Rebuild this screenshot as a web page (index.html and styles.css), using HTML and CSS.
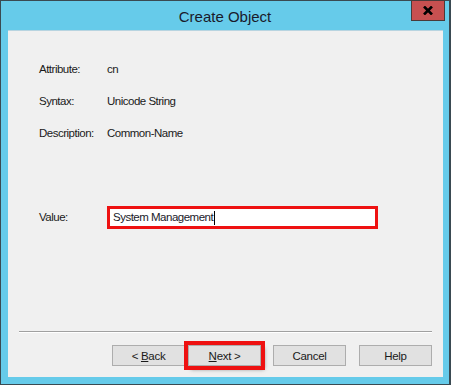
FILE: index.html
```html
<!DOCTYPE html>
<html lang="en">
<head>
  <meta charset="UTF-8">
  <title>Create Object</title>
  <link rel="stylesheet" href="styles.css">
</head>
<body>
<div class="window">
  <div class="titlebar">
    <div class="title">Create Object</div>
    <button class="close-btn" aria-label="Close">
      <svg width="10" height="9" viewBox="0 0 10 9">
        <path d="M1 0.5 L9 8.5 M9 0.5 L1 8.5" stroke="#000" stroke-width="2.6" fill="none"/>
      </svg>
    </button>
  </div>

  <div class="client">
    <div class="info">
      <div class="label">Attribute:</div>
      <div class="value">cn</div>
      <div class="label">Syntax:</div>
      <div class="value">Unicode String</div>
      <div class="label">Description:</div>
      <div class="value">Common-Name</div>
    </div>

    <div class="value-row">
      <div class="label">Value:</div>
      <div class="textbox">System Management<span class="caret"></span></div>
    </div>

    <div class="separator"></div>

    <div class="buttons">
      <button class="btn">&lt; <u>B</u>ack</button>
      <button class="btn btn-next"><u>N</u>ext &gt;</button>
      <button class="btn btn-cancel">Cancel</button>
      <button class="btn btn-help">Help</button>
    </div>
  </div>
</div>
</body>
</html>
```

FILE: styles.css
```css
html, body {
  margin: 0;
  background-color: #ffffff;
}

/* Outer window frame */
.window {
  width: 451px;
  height: 385px;
  box-sizing: border-box;
  border: 1px solid #3a4a52;
  border-right-width: 2px;
  background-color: #66cbea;
  display: flex;
  flex-direction: column;
  font-family: "Liberation Sans", Arial, sans-serif;
  color: #1a1a1a;
}

/* Title bar: title centered, close button on the right */
.titlebar {
  height: 29px;
  display: grid;
  grid-template-columns: 1fr auto 1fr;
}

.title {
  grid-column: 2;
  font-size: 15px;
  line-height: 29px;
  padding-top: 1px;
  color: #1a1a2a;
}

.close-btn {
  grid-column: 3;
  justify-self: end;
  align-self: start;
  margin: -1px 4px 0 0;
  width: 34px;
  height: 21px;
  padding: 0;
  border: 1px solid #4a3a3a;
  background-color: #c75050;
  display: flex;
  align-items: center;
  justify-content: center;
}

/* The grey dialog area */
.client {
  margin: 0 6px 7px 7px;
  flex: 1;
  background-color: #f0f0f0;
  border-top: 1px solid #b8d4e0;
  display: flex;
  flex-direction: column;
  font-size: 11.5px;
  letter-spacing: -0.5px;
}

.info {
  display: grid;
  grid-template-columns: 68px auto;
  row-gap: 19px;
  line-height: 13px;
  padding: 32px 0 0 31px;
}

.value-row {
  display: flex;
  align-items: center;
  margin: 66px 0 0 31px;
}

.value-row .label {
  width: 68px;
  line-height: 13px;
}

.btn u {
  text-decoration-thickness: 1px;
}

.textbox {
  width: 271px;
  height: 23px;
  box-sizing: border-box;
  border: 3px solid #ee1111;
  background-color: #ffffff;
  padding: 0 0 0 3px;
  line-height: 17px;
  color: #1a1a2a;
  display: flex;
  align-items: center;
}

.caret {
  display: inline-block;
  width: 1px;
  height: 14px;
  background-color: #000;
  margin-left: 1px;
}

.separator {
  margin: auto 11px 0 11px;
  height: 1px;
  background-color: #a0a0a0;
  border-bottom: 1px solid #ffffff;
}

.buttons {
  display: flex;
  justify-content: flex-end;
  padding: 12px 11px 11px 0;
}

.btn {
  width: 73px;
  height: 21px;
  box-sizing: border-box;
  border: 1px solid #adadad;
  background-color: #e1e1e1;
  font-family: inherit;
  font-size: 11.5px;
  letter-spacing: -0.3px;
  color: #1a1a1a;
  padding: 0;
}

.btn-next {
  margin-left: 3px;
  outline: 4px solid #ee1111;
  box-shadow: 3px 3px 4px rgba(0, 0, 0, 0.55);
}

.btn-cancel {
  margin-left: 12px;
}

.btn-help {
  margin-left: 13px;
}
```
